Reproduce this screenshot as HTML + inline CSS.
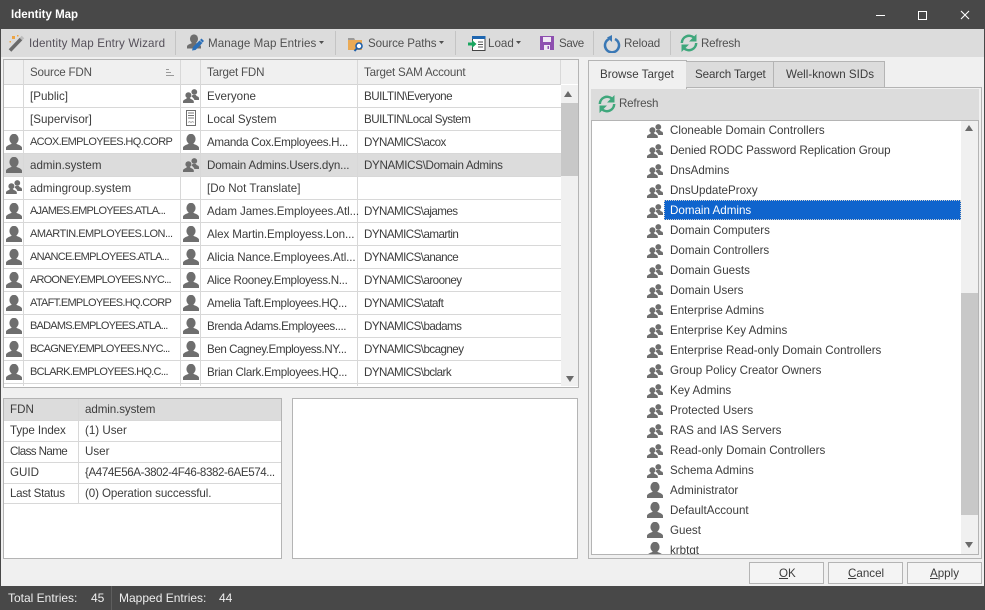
<!DOCTYPE html>
<html><head><meta charset="utf-8"><title>Identity Map</title>
<style>
html,body{margin:0;padding:0}
#a{position:relative;width:985px;height:610px;overflow:hidden;background:#f0f0f0;font:11.6px "Liberation Sans",sans-serif;color:#3c3c3c}
#a div,#a span.t,#a svg.p{position:absolute}
.t{white-space:pre;line-height:16px;height:16px;margin-top:1px}
.h{background:#c4c4c4}
.c{font-size:11px;margin-top:0}
.n{margin-top:0}
</style></head><body>
<svg width="0" height="0" style="position:absolute"><defs>
<symbol id="u" viewBox="0 0 16 16"><ellipse cx="8" cy="5" rx="4.600" ry="5.200" fill="#6e6e6e"/><path fill="#6e6e6e" d="M0 16v-2.200c0-1.800 2.800-2.800 5.300-3.800l.5-1.500h4.400l.5 1.500c2.500 1 5.300 2 5.300 3.800V16z"/></symbol>
<symbol id="g" viewBox="0 0 16 14"><circle cx="11.300" cy="3" r="2.900" fill="#6e6e6e"/><path fill="#6e6e6e" d="M8.500 7.500l1-1.500h3.600l.4 1c1.300.4 2.500 1 2.500 2.100V11h-4.600c-.4-1.400-1.500-2.500-2.900-3.500z"/><circle cx="5.400" cy="6.300" r="3" fill="#6e6e6e"/><path fill="#6e6e6e" d="M0 14v-1.500c0-1.300 1.800-2 3.400-2.700l.3-.8h3.400l.3.800c1.600.7 3.400 1.400 3.400 2.700V14z"/></symbol>
<symbol id="r" viewBox="0 0 18 18"><path fill="none" stroke="#3fa77c" stroke-width="2.500" d="M1.800 9a7.300 7.300 0 0 1 12.300-5.200M16.200 9a7.300 7.300 0 0 1-12.300 5.200"/><path fill="#3fa77c" d="M16.500 0v7.500H9zM1.500 18v-7.500H9z"/></symbol>
</defs></svg>
<div id="a">
<!-- title -->
<div style="left:0;top:0;width:985px;height:29px;background:#484848"></div>
<span class="t n" style="left:11px;top:7px;color:#fff;font-weight:bold;font-size:11.500px">Identity Map</span>
<div style="left:876px;top:15px;width:9px;height:1px;background:#fff"></div>
<div style="left:918px;top:11px;width:7px;height:7px;border:1px solid #fff"></div>
<svg class="p" style="left:960px;top:10px" width="10" height="10"><path d="M1 1l8 8M9 1l-8 8" stroke="#fff" stroke-width="1.100"/></svg>
<!-- window edges -->
<div style="left:0;top:29px;width:1px;height:557px;background:#484848"></div>
<div style="left:984px;top:29px;width:1px;height:557px;background:#484848"></div>
<!-- toolbar -->
<div style="left:1px;top:29px;width:983px;height:28px;background:#dcdcdc"></div>
<div class="h" style="left:175px;top:31px;width:1px;height:24px"></div>
<div class="h" style="left:335px;top:31px;width:1px;height:24px"></div>
<div class="h" style="left:455px;top:31px;width:1px;height:24px"></div>
<div class="h" style="left:593px;top:31px;width:1px;height:24px"></div>
<div class="h" style="left:670px;top:31px;width:1px;height:24px"></div>
<svg class="p" style="left:8px;top:34px" width="18" height="18"><path d="M2 16.500L13 5" stroke="#6a6a6a" stroke-width="3.600"/><path d="M13 5l2-2" stroke="#bdbdbd" stroke-width="3.600"/><path d="M4 2h3v3H4zM9 1h1.500v1.500H9zM1.500 7H3v1.500H1.500z" fill="#eda443"/></svg>
<span class="t" style="left:29px;top:35px;color:#55505a;letter-spacing:.14px">Identity Map Entry Wizard</span>
<svg class="p" style="left:187px;top:34px" width="18" height="18"><use href="#u" width="14" height="15" x="0" y="0"/><path d="M5 16.500l1-3.500 6.500-6.500 3 2.500-7 7z" fill="#2a6fb8"/><path d="M13 6l1.500-1.500 2.500 2.500-1.500 1.500z" fill="#2a6fb8"/></svg>
<span class="t" style="left:208px;top:35px;color:#505050;letter-spacing:.08px">Manage Map Entries</span>
<svg class="p" style="left:319px;top:41px" width="6" height="4"><path d="M0 0h5L2.500 3z" fill="#505050"/></svg>
<svg class="p" style="left:347px;top:35px" width="18" height="17"><path d="M1 3h6l1 2h7v10H1z" fill="#eaaa55"/><path d="M1 3h6l1 2H1z" fill="#9a9a9a"/><circle cx="12" cy="11" r="3" fill="#fff" stroke="#1f5fa8" stroke-width="1.600"/><path d="M9.800 13.500L7.500 16" stroke="#1f5fa8" stroke-width="2"/></svg>
<span class="t" style="left:368px;top:35px;color:#505050;letter-spacing:-.1px">Source Paths</span>
<svg class="p" style="left:439px;top:41px" width="6" height="4"><path d="M0 0h5L2.500 3z" fill="#505050"/></svg>
<svg class="p" style="left:468px;top:35px" width="18" height="17"><path d="M4.500 1.500h12.500v14H4.500z" fill="#fff" stroke="#444"/><path d="M4 1h13.500v3H4z" fill="#1e66b0"/><path d="M10 7h5M10 9.500h5M10 12h5" stroke="#555"/><path d="M0 7.500h4V5l4.500 4L4 13v-2.500H0z" fill="#19a65f"/></svg>
<span class="t" style="left:488px;top:35px;color:#505050">Load</span>
<svg class="p" style="left:516px;top:41px" width="6" height="4"><path d="M0 0h5L2.500 3z" fill="#505050"/></svg>
<svg class="p" style="left:539px;top:35px" width="16" height="16"><path d="M1 1h14v14H1z" fill="#8e4fb0"/><path d="M4 2h8v5H4z" fill="#f0e8f4"/><path d="M5 10h6v5H5z" fill="#f0e8f4"/><path d="M8.500 11h1.500v3H8.500z" fill="#8e4fb0"/></svg>
<span class="t" style="left:559px;top:35px;color:#505050;letter-spacing:-.4px">Save</span>
<svg class="p" style="left:603px;top:35px" width="18" height="18"><path d="M6 4a7 7 0 1 0 6 0" fill="none" stroke="#3a78b5" stroke-width="2.500"/><path d="M9 0v7L4 2.500z" fill="#3a78b5"/></svg>
<span class="t" style="left:624px;top:35px;color:#505050;letter-spacing:-.1px">Reload</span>
<svg class="p" style="left:680px;top:34px" width="18" height="18"><use href="#r"/></svg>
<span class="t" style="left:701px;top:35px;color:#505050;letter-spacing:-.2px">Refresh</span>

<!-- main grid -->
<div style="left:3px;top:59px;width:574px;height:327px;background:#fff;border:1px solid #b4b4b4"></div>
<div style="left:4px;top:60px;width:574px;height:24px;background:#f0f0f0"></div>
<div style="left:4px;top:84px;width:557px;height:1px;background:#d4d4d4"></div>
<!-- row lines -->
<div style="left:4px;top:107px;width:557px;height:1px;background:#d8d8d8"></div>
<div style="left:4px;top:130px;width:557px;height:1px;background:#d8d8d8"></div>
<div style="left:4px;top:154px;width:557px;height:23px;background:#dcdcdc"></div>
<div style="left:4px;top:153px;width:557px;height:1px;background:#d8d8d8"></div>
<div style="left:4px;top:176px;width:557px;height:1px;background:#d8d8d8"></div>
<div style="left:4px;top:199px;width:557px;height:1px;background:#d8d8d8"></div>
<div style="left:4px;top:222px;width:557px;height:1px;background:#d8d8d8"></div>
<div style="left:4px;top:245px;width:557px;height:1px;background:#d8d8d8"></div>
<div style="left:4px;top:268px;width:557px;height:1px;background:#d8d8d8"></div>
<div style="left:4px;top:291px;width:557px;height:1px;background:#d8d8d8"></div>
<div style="left:4px;top:314px;width:557px;height:1px;background:#d8d8d8"></div>
<div style="left:4px;top:337px;width:557px;height:1px;background:#d8d8d8"></div>
<div style="left:4px;top:360px;width:557px;height:1px;background:#d8d8d8"></div>
<div style="left:4px;top:383px;width:557px;height:1px;background:#d8d8d8"></div>
<!-- col lines -->
<div style="left:23px;top:60px;width:1px;height:326px;background:#d8d8d8"></div>
<div style="left:180px;top:60px;width:1px;height:326px;background:#d8d8d8"></div>
<div style="left:200px;top:60px;width:1px;height:326px;background:#d8d8d8"></div>
<div style="left:357px;top:60px;width:1px;height:326px;background:#d8d8d8"></div>
<div style="left:560px;top:60px;width:1px;height:24px;background:#d8d8d8"></div>
<!-- header text -->
<span class="t" style="left:30px;top:64px;color:#505050;letter-spacing:-.2px">Source FDN</span>
<svg class="p" style="left:166px;top:69px" width="9" height="8"><path d="M0 .5h3M0 3.500h5M0 6.500h8" stroke="#9a9a9a"/></svg>
<span class="t" style="left:207px;top:64px;color:#505050;letter-spacing:-.2px">Target FDN</span>
<span class="t" style="left:364px;top:64px;color:#505050;letter-spacing:-.2px">Target SAM Account</span>
<!-- scrollbar -->
<div style="left:561px;top:85px;width:17px;height:301px;background:#f0f0f0"></div>
<div style="left:561px;top:103px;width:17px;height:73px;background:#c8c8c8"></div>
<svg class="p" style="left:564px;top:91px" width="9" height="6"><path d="M0 6h8L4 0z" fill="#6a6a6a"/></svg>
<svg class="p" style="left:566px;top:376px" width="9" height="6"><path d="M0 0h8L4 6z" fill="#6a6a6a"/></svg>
<!-- rows -->
<span class="t" style="left:30px;top:88px">[Public]</span>
<svg class="p" style="left:183px;top:89px" width="16" height="14"><use href="#g"/></svg>
<span class="t" style="left:207px;top:88px">Everyone</span>
<span class="t" style="left:364px;top:88px;letter-spacing:-.48px">BUILTIN\Everyone</span>

<span class="t" style="left:30px;top:111px">[Supervisor]</span>
<svg class="p" style="left:186px;top:110px" width="11" height="17"><path d="M.5.500h9v15h-9z" fill="#fff" stroke="#6e6e6e"/><path d="M2 3h6M2 5.500h6M2 8h6" stroke="#777"/><path d="M2 12.500l1.500-1 1.500 1 1.500-1 1.500 1" stroke="#aaa" fill="none"/></svg>
<span class="t" style="left:207px;top:111px">Local System</span>
<span class="t" style="left:364px;top:111px;letter-spacing:-.5px">BUILTIN\Local System</span>

<svg class="p" style="left:6px;top:134px" width="16" height="16"><use href="#u"/></svg>
<span class="t c" style="left:30px;top:134px;letter-spacing:-.65px">ACOX.EMPLOYEES.HQ.CORP</span>
<svg class="p" style="left:183px;top:134px" width="16" height="16"><use href="#u"/></svg>
<span class="t" style="left:207px;top:134px;letter-spacing:-.32px">Amanda Cox.Employees.H...</span>
<span class="t" style="left:364px;top:134px;letter-spacing:-.55px">DYNAMICS\acox</span>

<svg class="p" style="left:6px;top:157px" width="16" height="16"><use href="#u"/></svg>
<span class="t" style="left:30px;top:157px">admin.system</span>
<svg class="p" style="left:183px;top:158px" width="16" height="14"><use href="#g"/></svg>
<span class="t" style="left:207px;top:157px;letter-spacing:-.15px">Domain Admins.Users.dyn...</span>
<span class="t" style="left:364px;top:157px;letter-spacing:-.32px">DYNAMICS\Domain Admins</span>

<svg class="p" style="left:6px;top:180px" width="16" height="14"><use href="#g"/></svg>
<span class="t" style="left:30px;top:180px">admingroup.system</span>
<span class="t" style="left:207px;top:180px">[Do Not Translate]</span>

<svg class="p" style="left:6px;top:203px" width="16" height="16"><use href="#u"/></svg>
<span class="t c" style="left:30px;top:203px;letter-spacing:-.78px">AJAMES.EMPLOYEES.ATLA...</span>
<svg class="p" style="left:183px;top:203px" width="16" height="16"><use href="#u"/></svg>
<span class="t" style="left:207px;top:203px;letter-spacing:-.1px">Adam James.Employees.Atl...</span>
<span class="t" style="left:364px;top:203px;letter-spacing:-.55px">DYNAMICS\ajames</span>

<svg class="p" style="left:6px;top:226px" width="16" height="16"><use href="#u"/></svg>
<span class="t c" style="left:30px;top:226px;letter-spacing:-.52px">AMARTIN.EMPLOYEES.LON...</span>
<svg class="p" style="left:183px;top:226px" width="16" height="16"><use href="#u"/></svg>
<span class="t" style="left:207px;top:226px;letter-spacing:-.1px">Alex Martin.Employess.Lon...</span>
<span class="t" style="left:364px;top:226px;letter-spacing:-.55px">DYNAMICS\amartin</span>

<svg class="p" style="left:6px;top:249px" width="16" height="16"><use href="#u"/></svg>
<span class="t c" style="left:30px;top:249px;letter-spacing:-.7px">ANANCE.EMPLOYEES.ATLA...</span>
<svg class="p" style="left:183px;top:249px" width="16" height="16"><use href="#u"/></svg>
<span class="t" style="left:207px;top:249px;letter-spacing:-.1px">Alicia Nance.Employees.Atl...</span>
<span class="t" style="left:364px;top:249px;letter-spacing:-.55px">DYNAMICS\anance</span>

<svg class="p" style="left:6px;top:272px" width="16" height="16"><use href="#u"/></svg>
<span class="t c" style="left:30px;top:272px;letter-spacing:-.8px">AROONEY.EMPLOYEES.NYC...</span>
<svg class="p" style="left:183px;top:272px" width="16" height="16"><use href="#u"/></svg>
<span class="t" style="left:207px;top:272px;letter-spacing:-.3px">Alice Rooney.Employess.N...</span>
<span class="t" style="left:364px;top:272px;letter-spacing:-.55px">DYNAMICS\arooney</span>

<svg class="p" style="left:6px;top:295px" width="16" height="16"><use href="#u"/></svg>
<span class="t c" style="left:30px;top:295px;letter-spacing:-.7px">ATAFT.EMPLOYEES.HQ.CORP</span>
<svg class="p" style="left:183px;top:295px" width="16" height="16"><use href="#u"/></svg>
<span class="t" style="left:207px;top:295px;letter-spacing:-.3px">Amelia Taft.Employees.HQ...</span>
<span class="t" style="left:364px;top:295px;letter-spacing:-.55px">DYNAMICS\ataft</span>

<svg class="p" style="left:6px;top:318px" width="16" height="16"><use href="#u"/></svg>
<span class="t c" style="left:30px;top:318px;letter-spacing:-.78px">BADAMS.EMPLOYEES.ATLA...</span>
<svg class="p" style="left:183px;top:318px" width="16" height="16"><use href="#u"/></svg>
<span class="t" style="left:207px;top:318px;letter-spacing:-.4px">Brenda Adams.Employees....</span>
<span class="t" style="left:364px;top:318px;letter-spacing:-.55px">DYNAMICS\badams</span>

<svg class="p" style="left:6px;top:341px" width="16" height="16"><use href="#u"/></svg>
<span class="t c" style="left:30px;top:341px;letter-spacing:-.8px">BCAGNEY.EMPLOYEES.NYC...</span>
<svg class="p" style="left:183px;top:341px" width="16" height="16"><use href="#u"/></svg>
<span class="t" style="left:207px;top:341px;letter-spacing:-.42px">Ben Cagney.Employess.NY...</span>
<span class="t" style="left:364px;top:341px;letter-spacing:-.55px">DYNAMICS\bcagney</span>

<svg class="p" style="left:6px;top:364px" width="16" height="16"><use href="#u"/></svg>
<span class="t c" style="left:30px;top:364px;letter-spacing:-.7px">BCLARK.EMPLOYEES.HQ.C...</span>
<svg class="p" style="left:183px;top:364px" width="16" height="16"><use href="#u"/></svg>
<span class="t" style="left:207px;top:364px;letter-spacing:-.3px">Brian Clark.Employees.HQ...</span>
<span class="t" style="left:364px;top:364px;letter-spacing:-.55px">DYNAMICS\bclark</span>

<!-- details -->
<div style="left:3px;top:398px;width:277px;height:159px;background:#fff;border:1px solid #b4b4b4"></div>
<div style="left:4px;top:399px;width:277px;height:21px;background:#dcdcdc"></div>
<div style="left:4px;top:420px;width:277px;height:1px;background:#d8d8d8"></div>
<div style="left:4px;top:441px;width:277px;height:1px;background:#d8d8d8"></div>
<div style="left:4px;top:462px;width:277px;height:1px;background:#d8d8d8"></div>
<div style="left:4px;top:483px;width:277px;height:1px;background:#d8d8d8"></div>
<div style="left:4px;top:503px;width:277px;height:1px;background:#d8d8d8"></div>
<div style="left:78px;top:399px;width:1px;height:105px;background:#d8d8d8"></div>
<span class="t" style="left:10px;top:401px">FDN</span><span class="t" style="left:85px;top:401px;letter-spacing:-.1px">admin.system</span>
<span class="t" style="left:10px;top:422px;letter-spacing:-.1px">Type Index</span><span class="t" style="left:85px;top:422px">(1) User</span>
<span class="t" style="left:10px;top:443px;letter-spacing:-.6px">Class Name</span><span class="t" style="left:85px;top:443px">User</span>
<span class="t" style="left:10px;top:464px">GUID</span><span class="t" style="left:85px;top:464px;letter-spacing:-.41px">{A474E56A-3802-4F46-8382-6AE574...</span>
<span class="t" style="left:10px;top:485px;letter-spacing:-.3px">Last Status</span><span class="t" style="left:85px;top:485px;letter-spacing:-.1px">(0) Operation successful.</span>
<div style="left:292px;top:398px;width:284px;height:159px;background:#fff;border:1px solid #b4b4b4"></div>

<!-- tabs -->
<div style="left:588px;top:87px;width:392px;height:470px;border:1px solid #b4b4b4"></div>
<div style="left:588px;top:60px;width:97px;height:28px;background:#f0f0f0;border:1px solid #b4b4b4;border-bottom:0"></div>
<div style="left:686px;top:61px;width:87px;height:25px;background:#dcdcdc;border:1px solid #b4b4b4;border-left:0"></div>
<div style="left:774px;top:61px;width:110px;height:25px;background:#dcdcdc;border:1px solid #b4b4b4;border-left:0"></div>
<span class="t" style="left:600px;top:66px">Browse Target</span>
<span class="t" style="left:695px;top:66px;letter-spacing:-.1px">Search Target</span>
<span class="t" style="left:786px;top:66px">Well-known SIDs</span>
<div style="left:591px;top:89px;width:388px;height:31px;background:#dcdcdc"></div>
<svg class="p" style="left:598px;top:95px" width="18" height="18"><use href="#r"/></svg>
<span class="t" style="left:619px;top:95px;color:#505050;letter-spacing:-.2px">Refresh</span>
<!-- tree -->
<div style="left:591px;top:120px;width:386px;height:433px;background:#fff;border:1px solid #b4b4b4;overflow:hidden">
<div style="left:72px;top:79px;width:297px;height:19px;background:#0f64cd;border-top:1px dotted #fff;outline:1px dotted #ccc;outline-offset:-1px"></div>
<div style="left:369px;top:0;width:17px;height:433px;background:#f0f0f0"></div>
<div style="left:369px;top:172px;width:17px;height:222px;background:#c8c8c8"></div>
<svg class="p" style="left:373px;top:4px" width="9" height="6"><path d="M0 6h8L4 0z" fill="#6a6a6a"/></svg>
<svg class="p" style="left:373px;top:421px" width="9" height="6"><path d="M0 0h8L4 6z" fill="#6a6a6a"/></svg>
<div style="left:0;top:-1px;width:369px;height:434px">
<svg class="p" style="left:55px;top:4px" width="16" height="14"><use href="#g"/></svg><span class="t" style="left:78px;top:2px">Cloneable Domain Controllers</span>
<svg class="p" style="left:55px;top:24px" width="16" height="14"><use href="#g"/></svg><span class="t" style="left:78px;top:22px;letter-spacing:-.1px">Denied RODC Password Replication Group</span>
<svg class="p" style="left:55px;top:44px" width="16" height="14"><use href="#g"/></svg><span class="t" style="left:78px;top:42px">DnsAdmins</span>
<svg class="p" style="left:55px;top:64px" width="16" height="14"><use href="#g"/></svg><span class="t" style="left:78px;top:62px">DnsUpdateProxy</span>
<svg class="p" style="left:55px;top:84px" width="16" height="14"><use href="#g"/></svg><span class="t" style="left:78px;top:82px;color:#fff">Domain Admins</span>
<svg class="p" style="left:55px;top:104px" width="16" height="14"><use href="#g"/></svg><span class="t" style="left:78px;top:102px">Domain Computers</span>
<svg class="p" style="left:55px;top:124px" width="16" height="14"><use href="#g"/></svg><span class="t" style="left:78px;top:122px">Domain Controllers</span>
<svg class="p" style="left:55px;top:144px" width="16" height="14"><use href="#g"/></svg><span class="t" style="left:78px;top:142px">Domain Guests</span>
<svg class="p" style="left:55px;top:164px" width="16" height="14"><use href="#g"/></svg><span class="t" style="left:78px;top:162px">Domain Users</span>
<svg class="p" style="left:55px;top:184px" width="16" height="14"><use href="#g"/></svg><span class="t" style="left:78px;top:182px">Enterprise Admins</span>
<svg class="p" style="left:55px;top:204px" width="16" height="14"><use href="#g"/></svg><span class="t" style="left:78px;top:202px">Enterprise Key Admins</span>
<svg class="p" style="left:55px;top:224px" width="16" height="14"><use href="#g"/></svg><span class="t" style="left:78px;top:222px">Enterprise Read-only Domain Controllers</span>
<svg class="p" style="left:55px;top:244px" width="16" height="14"><use href="#g"/></svg><span class="t" style="left:78px;top:242px">Group Policy Creator Owners</span>
<svg class="p" style="left:55px;top:264px" width="16" height="14"><use href="#g"/></svg><span class="t" style="left:78px;top:262px">Key Admins</span>
<svg class="p" style="left:55px;top:284px" width="16" height="14"><use href="#g"/></svg><span class="t" style="left:78px;top:282px">Protected Users</span>
<svg class="p" style="left:55px;top:304px" width="16" height="14"><use href="#g"/></svg><span class="t" style="left:78px;top:302px">RAS and IAS Servers</span>
<svg class="p" style="left:55px;top:324px" width="16" height="14"><use href="#g"/></svg><span class="t" style="left:78px;top:322px">Read-only Domain Controllers</span>
<svg class="p" style="left:55px;top:344px" width="16" height="14"><use href="#g"/></svg><span class="t" style="left:78px;top:342px">Schema Admins</span>
<svg class="p" style="left:55px;top:362px" width="16" height="16"><use href="#u"/></svg><span class="t" style="left:78px;top:362px">Administrator</span>
<svg class="p" style="left:55px;top:382px" width="16" height="16"><use href="#u"/></svg><span class="t" style="left:78px;top:382px">DefaultAccount</span>
<svg class="p" style="left:55px;top:402px" width="16" height="16"><use href="#u"/></svg><span class="t" style="left:78px;top:402px">Guest</span>
<svg class="p" style="left:55px;top:422px" width="16" height="16"><use href="#u"/></svg><span class="t" style="left:78px;top:422px">krbtgt</span>
</div>
</div>
<!-- buttons -->
<div style="left:749px;top:562px;width:73px;height:20px;border:1px solid #b4b4b4;background:#f4f4f4"></div>
<div style="left:828px;top:562px;width:73px;height:20px;border:1px solid #b4b4b4;background:#f4f4f4"></div>
<div style="left:907px;top:562px;width:73px;height:20px;border:1px solid #b4b4b4;background:#f4f4f4"></div>
<span class="t" style="left:779px;top:565px"><u>O</u>K</span>
<span class="t" style="left:848px;top:565px"><u>C</u>ancel</span>
<span class="t" style="left:930px;top:565px"><u>A</u>pply</span>
<!-- status -->
<div style="left:0;top:586px;width:985px;height:24px;background:#484848"></div>
<div style="left:111px;top:586px;width:1px;height:24px;background:#5e5e5e"></div>
<span class="t n" style="left:8px;top:590px;color:#eee;font-size:12px">Total Entries:</span>
<span class="t n" style="left:91px;top:590px;color:#eee;font-size:12px">45</span>
<span class="t n" style="left:119px;top:590px;color:#eee;font-size:12px">Mapped Entries:</span>
<span class="t n" style="left:219px;top:590px;color:#eee;font-size:12px">44</span>
</div>
</body></html>
